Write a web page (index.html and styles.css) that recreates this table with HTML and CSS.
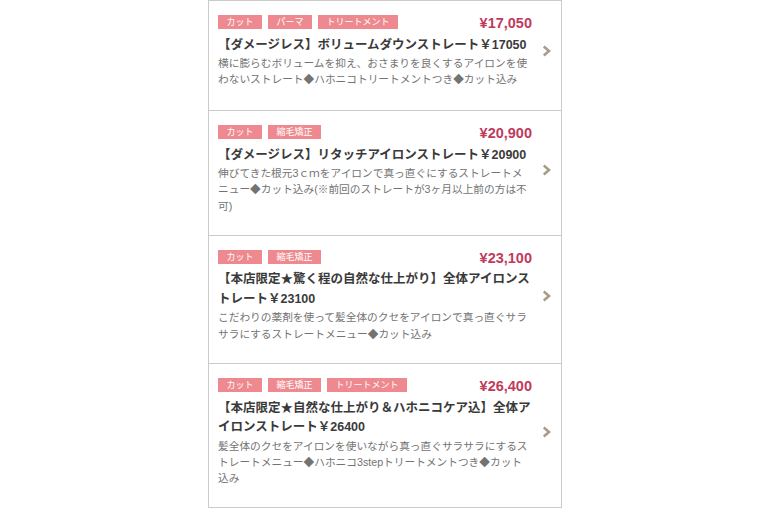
FILE: index.html
```html
<!DOCTYPE html>
<html lang="ja">
<head>
<meta charset="utf-8">
<link rel="stylesheet" href="styles.css">
</head>
<body>
<ul class="list">
  <li class="card">
    <div class="main">
      <div class="head">
        <div class="tags"><span class="tag">カット</span><span class="tag">パーマ</span><span class="tag">トリートメント</span></div>
        <div class="price">¥17,050</div>
      </div>
      <p class="title">【ダメージレス】ボリュームダウンストレート￥17050</p>
      <p class="desc">横に膨らむボリュームを抑え、おさまりを良くするアイロンを使わないストレート◆ハホニコトリートメントつき◆カット込み</p>
    </div>
    <div class="arrow"><svg width="9" height="12" viewBox="0 0 9 12"><path d="M1.8 1.5 L7 6 L1.8 10.5" /></svg></div>
  </li>
  <li class="card">
    <div class="main">
      <div class="head">
        <div class="tags"><span class="tag">カット</span><span class="tag">縮毛矯正</span></div>
        <div class="price">¥20,900</div>
      </div>
      <p class="title">【ダメージレス】リタッチアイロンストレート￥20900</p>
      <p class="desc">伸びてきた根元3ｃｍをアイロンで真っ直ぐにするストレートメニュー◆カット込み(※前回のストレートが3ヶ月以上前の方は不可)</p>
    </div>
    <div class="arrow"><svg width="9" height="12" viewBox="0 0 9 12"><path d="M1.8 1.5 L7 6 L1.8 10.5" /></svg></div>
  </li>
  <li class="card">
    <div class="main">
      <div class="head">
        <div class="tags"><span class="tag">カット</span><span class="tag">縮毛矯正</span></div>
        <div class="price">¥23,100</div>
      </div>
      <p class="title">【本店限定★驚く程の自然な仕上がり】全体アイロンストレート￥23100</p>
      <p class="desc">こだわりの薬剤を使って髪全体のクセをアイロンで真っ直ぐサラサラにするストレートメニュー◆カット込み</p>
    </div>
    <div class="arrow"><svg width="9" height="12" viewBox="0 0 9 12"><path d="M1.8 1.5 L7 6 L1.8 10.5" /></svg></div>
  </li>
  <li class="card">
    <div class="main">
      <div class="head">
        <div class="tags"><span class="tag">カット</span><span class="tag">縮毛矯正</span><span class="tag">トリートメント</span></div>
        <div class="price">¥26,400</div>
      </div>
      <p class="title">【本店限定★自然な仕上がり＆ハホニコケア込】全体アイロンストレート￥26400</p>
      <p class="desc">髪全体のクセをアイロンを使いながら真っ直ぐサラサラにするストレートメニュー◆ハホニコ3stepトリートメントつき◆カット込み</p>
    </div>
    <div class="arrow"><svg width="9" height="12" viewBox="0 0 9 12"><path d="M1.8 1.5 L7 6 L1.8 10.5" /></svg></div>
  </li>
</ul>
</body>
</html>
```
FILE: styles.css
```css
html, body {
  margin: 0;
  padding: 0;
  background: #fff;
}
body {
  font-family: "Liberation Sans", "Noto Sans CJK JP", sans-serif;
  display: flex;
  justify-content: center;
}
.list {
  list-style: none;
  margin: 0;
  padding: 0;
  width: 352px;
  border-left: 1px solid #cbcbcb;
  border-right: 1px solid #cbcbcb;
}
.card {
  display: flex;
  padding: 14px 0 21px 9px;
  border-bottom: 1px solid #cbcbcb;
}
.card:first-child {
  border-top: 1px solid #cbcbcb;
  padding-top: 14px;
  padding-bottom: 22.5px;
}
.main {
  width: 314px;
}
.head {
  display: flex;
  justify-content: space-between;
  align-items: flex-start;
  height: 17px;
}
.tags {
  display: flex;
  gap: 6px;
}
.tag {
  display: block;
  background: #ee8a8f;
  color: #fff;
  font-size: 9px;
  height: 14px;
  line-height: 14px;
  padding: 0 8.5px;
}
.price {
  color: #c13a5c;
  font-weight: bold;
  font-size: 14.5px;
  line-height: 17px;
}
.title {
  margin: 3.5px 0 0;
  font-size: 12.5px;
  line-height: 19.5px;
  font-weight: bold;
  color: #3a3a3a;
}
.desc {
  margin: 0;
  font-size: 10.7px;
  line-height: 16.3px;
  color: #737373;
}
.arrow {
  width: 28px;
  display: flex;
  align-items: center;
  justify-content: center;
}
.arrow path {
  fill: none;
  stroke: #a89d8b;
  stroke-width: 2.6;
}
```
